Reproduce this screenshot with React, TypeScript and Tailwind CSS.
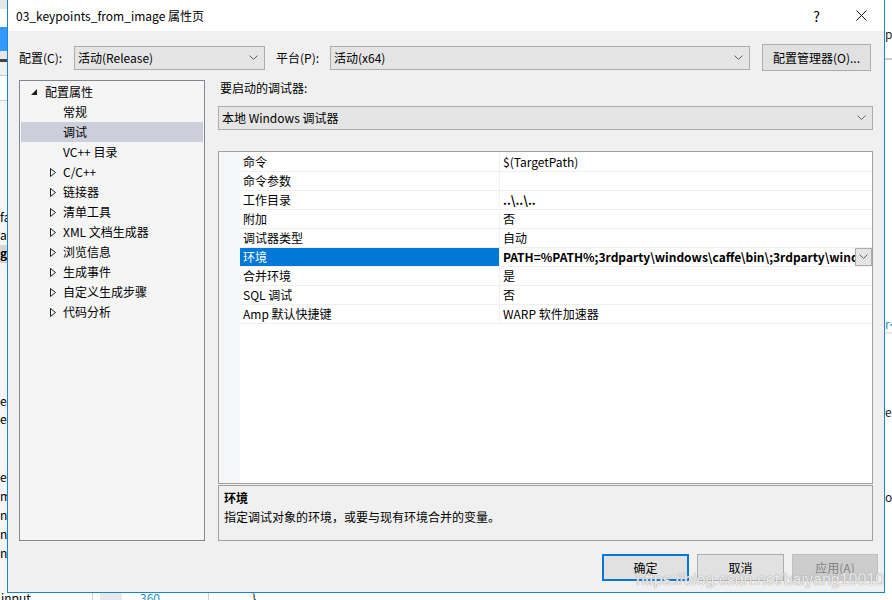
const font = { fontFamily: '"Noto Sans CJK SC", "Noto Sans", sans-serif' };

const treeItems: { label: string; kind: 'root' | 'leaf' | 'closed'; selected?: boolean }[] = [
  { label: '配置属性', kind: 'root' },
  { label: '常规', kind: 'leaf' },
  { label: '调试', kind: 'leaf', selected: true },
  { label: 'VC++ 目录', kind: 'leaf' },
  { label: 'C/C++', kind: 'closed' },
  { label: '链接器', kind: 'closed' },
  { label: '清单工具', kind: 'closed' },
  { label: 'XML 文档生成器', kind: 'closed' },
  { label: '浏览信息', kind: 'closed' },
  { label: '生成事件', kind: 'closed' },
  { label: '自定义生成步骤', kind: 'closed' },
  { label: '代码分析', kind: 'closed' },
];

const props: { name: string; value: string; bold?: boolean; selected?: boolean }[] = [
  { name: '命令', value: '$(TargetPath)' },
  { name: '命令参数', value: '' },
  { name: '工作目录', value: '..\\..\\..', bold: true },
  { name: '附加', value: '否' },
  { name: '调试器类型', value: '自动' },
  { name: '环境', value: 'PATH=%PATH%;3rdparty\\windows\\caffe\\bin\\;3rdparty\\windows\\opencv\\x64\\vc14\\bin', bold: true, selected: true },
  { name: '合并环境', value: '是' },
  { name: 'SQL 调试', value: '否' },
  { name: 'Amp 默认快捷键', value: 'WARP 软件加速器' },
];

function Chevron() {
  return (
    <svg width="9" height="5" viewBox="0 0 9 5" className="shrink-0">
      <path d="M0.5 0.5 L4.5 4.5 L8.5 0.5" fill="none" stroke="#606060" strokeWidth="1" />
    </svg>
  );
}

function Combo({ text, width }: { text: string; width: string }) {
  return (
    <div className={`${width} h-[24px] flex items-center justify-between bg-[#e5e5e5] border border-[#adadad] pl-[3px] pr-[6px]`}>
      <span>{text}</span>
      <Chevron />
    </div>
  );
}

function TreeRow({ item }: { item: (typeof treeItems)[number] }) {
  return (
    <div className={`h-[20px] flex items-center ${item.selected ? 'bg-[#cccedb]' : ''}`}>
      {item.kind === 'root' && (
        <>
          <svg width="6" height="6" viewBox="0 0 6 6" className="ml-[10px]">
            <path d="M6 0 L6 6 L0 6 Z" fill="#1e1e1e" />
          </svg>
          <span className="ml-[8px]">{item.label}</span>
        </>
      )}
      {item.kind === 'closed' && (
        <>
          <svg width="6" height="9" viewBox="0 0 6 9" className="ml-[29px]">
            <path d="M0.5 0.5 L5.5 4.5 L0.5 8.5 Z" fill="none" stroke="#1e1e1e" strokeWidth="1" />
          </svg>
          <span className="ml-[7px]">{item.label}</span>
        </>
      )}
      {item.kind === 'leaf' && <span className="ml-[42px]">{item.label}</span>}
    </div>
  );
}

export default function App() {
  return (
    <div className="relative w-[892px] h-[600px] overflow-hidden bg-white text-[12px] leading-[16px] text-black" style={font}>
      <div className="flex h-[593px]">
        {/* window behind, left edge */}
        <div className="w-[7px] shrink-0 flex flex-col bg-[#f5f5f5] text-[12px]">
          <div className="h-[9px] bg-[#e6e6e6]" />
          <div className="h-[18px] bg-white" />
          <div className="h-[24px] bg-[#3399ff]" />
          <div className="h-[8px] bg-[#e6e6e6]" />
          <div className="h-[3px] bg-[#444]" />
          <div className="h-[13px] bg-[#f0f0f0]" />
          <div className="h-[26px] bg-white border-y border-[#cccccc]" />
          <div className="h-[108px]" />
          <div className="h-[18px] overflow-hidden whitespace-nowrap">fa</div>
          <div className="h-[18px] overflow-hidden whitespace-nowrap">ag</div>
          <div className="h-[18px] bg-[#d6d6d6] font-bold overflow-hidden whitespace-nowrap">g</div>
          <div className="h-[130px]" />
          <div className="h-[18px] overflow-hidden">e</div>
          <div className="h-[18px] overflow-hidden">e</div>
          <div className="h-[40px]" />
          <div className="h-[19px] overflow-hidden">e</div>
          <div className="h-[19px] overflow-hidden">m</div>
          <div className="h-[19px] overflow-hidden">n_</div>
          <div className="h-[19px] overflow-hidden">n_</div>
          <div className="h-[19px] overflow-hidden">n_</div>
        </div>

        {/* dialog */}
        <div className="w-[878px] shrink-0 flex flex-col border-x border-b border-[#1883d7] bg-[#f0f0f0]">
          <div className="h-[31px] bg-white flex items-center pl-[8px] pr-[17px]">
            <span className="text-[12px]">03_keypoints_from_image 属性页</span>
            <span className="ml-auto text-[14px] mr-[36px]">?</span>
            <svg width="11" height="11" viewBox="0 0 11 11">
              <path d="M0.5 0.5 L10.5 10.5 M10.5 0.5 L0.5 10.5" stroke="#111" strokeWidth="1" />
            </svg>
          </div>

          <div className="flex items-center pt-[13px] pl-[11px]">
            <span className="w-[55px]">配置(C):</span>
            <Combo text="活动(Release)" width="w-[191px]" />
            <span className="w-[54px] ml-[11px]">平台(P):</span>
            <Combo text="活动(x64)" width="w-[420px]" />
            <div className="ml-[12px] w-[109px] h-[27px] flex items-center justify-center bg-[#e1e1e1] border border-[#adadad]">
              配置管理器(O)...
            </div>
          </div>

          <div className="flex mt-[9px] pl-[11px] h-[461px]">
            <div className="w-[186px] shrink-0 border border-[#828790] bg-[#f5f5f5] p-[1px] flex flex-col">
              {treeItems.map((t) => (
                <TreeRow key={t.label} item={t} />
              ))}
            </div>

            <div className="ml-[13px] w-[655px] flex flex-col">
              <div className="pl-[2px] h-[17px] flex items-center">要启动的调试器:</div>
              <div className="mt-[9px]">
                <Combo text="本地 Windows 调试器" width="w-[655px]" />
              </div>

              <div className="mt-[21px] h-[334px] border border-[#a0a0a0] bg-white flex overflow-hidden">
                <div className="w-[21px] shrink-0 bg-[#f5f6f8]" />
                <div className="flex-1 min-w-0 flex flex-col pt-[1px]">
                  {props.map((p) => (
                    <div key={p.name} className="h-[19px] flex border-b border-[#f0f0f0]">
                      <div
                        className={`w-[260px] shrink-0 pl-[3px] pt-[1px] flex items-center border-r border-[#f0f0f0] ${
                          p.selected ? 'bg-[#0078d7] text-white' : ''
                        }`}
                      >
                        {p.name}
                      </div>
                      <div className={`flex-1 min-w-0 flex items-center pl-[3px] ${p.bold ? 'font-bold' : ''}`}>
                        <span className="flex-1 min-w-0 pt-[1px] overflow-hidden whitespace-nowrap">{p.value}</span>
                        {p.selected && (
                          <div className="w-[17px] h-[18px] shrink-0 flex items-center justify-center bg-[#e5e5e5] border border-[#adadad]">
                            <Chevron />
                          </div>
                        )}
                      </div>
                    </div>
                  ))}
                </div>
              </div>

              <div className="mt-[1px] h-[56px] border border-[#a0a0a0] bg-[#f0f0f0] pl-[5px] pt-[3px]">
                <div className="font-bold h-[18px] flex items-center">环境</div>
                <div className="h-[19px] flex items-center">指定调试对象的环境，或要与现有环境合并的变量。</div>
              </div>
            </div>
          </div>

          <div className="flex mt-[13px] pl-[594px] gap-[8px] text-[12px]">
            <div className="w-[87px] h-[27px] flex items-center justify-center bg-[#e1e1e1] border-2 border-[#0078d7]">确定</div>
            <div className="w-[87px] h-[27px] flex items-center justify-center bg-[#e1e1e1] border border-[#adadad]">取消</div>
            <div className="w-[86px] h-[27px] flex items-center justify-center bg-[#cccccc] border border-[#bfbfbf] text-[#838383]">
              应用(A)
            </div>
          </div>
        </div>

        {/* window behind, right edge */}
        <div className="w-[7px] shrink-0 flex flex-col bg-white text-[12px] text-[#1e1e1e]">
          <div className="h-[26px]" />
          <div className="h-[16px] overflow-hidden">p</div>
          <div className="h-[18px] border-b-2 border-[#cccccc]" />
          <div className="h-[256px]" />
          <div className="h-[16px] overflow-hidden text-[#2b91af]">r&lt;</div>
          <div className="h-[2px] bg-[#e8e8e8]" />
          <div className="h-[70px]" />
          <div className="h-[16px] overflow-hidden">eF</div>
          <div className="h-[69px]" />
          <div className="h-[16px] overflow-hidden">oc</div>
        </div>
      </div>

      {/* window behind, bottom edge */}
      <div className="h-[7px] flex items-start text-[12px] leading-[10px] overflow-hidden">
        <span className="w-[92px] pl-[1px] overflow-hidden">input</span>
        <div className="w-[1px] h-[7px] bg-[#d0d0d0]" />
        <div className="w-[22px] h-[7px] bg-[#e8e8e8] ml-[7px]" />
        <span className="ml-[18px] w-[68px] text-[#2b91af]">360</span>
        <div className="w-[1px] h-[7px] bg-[#d0d0d0]" />
        <span className="ml-[43px]">{'}'}</span>
      </div>

      {/* watermark */}
      <div
        className="absolute left-[636px] top-[570px] text-[16px] leading-[20px] text-white/80 whitespace-nowrap [text-shadow:0_0_1px_#a0a0a0,0_0_1px_#a0a0a0]"
        style={{ fontFamily: '"Liberation Sans", Arial, sans-serif' }}
      >
        https://blog.csdn.net/baiyang10010
      </div>
    </div>
  );
}
